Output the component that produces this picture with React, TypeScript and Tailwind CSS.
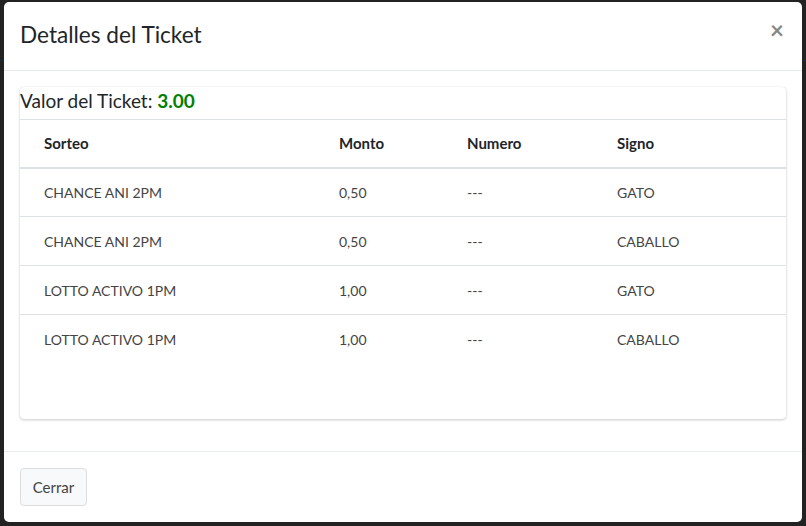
import React from "react";

const rows = [
  { s: "CHANCE ANI 2PM", m: "0,50", n: "---", g: "GATO" },
  { s: "CHANCE ANI 2PM", m: "0,50", n: "---", g: "CABALLO" },
  { s: "LOTTO ACTIVO 1PM", m: "1,00", n: "---", g: "GATO" },
  { s: "LOTTO ACTIVO 1PM", m: "1,00", n: "---", g: "CABALLO" },
];

export default function App() {
  return (
    <div
      className="w-[806px] h-[526px] bg-[#222222] overflow-hidden relative pl-[4px] pt-[2px]"
      style={{ fontFamily: "Lato, 'Liberation Sans', sans-serif" }}
    >
      <div className="absolute left-0 top-[60px] w-full h-px bg-[#1c2a3a]" />
      <div className="relative w-[798px] h-[520px] bg-white rounded-[5px] flex flex-col">
        <div className="h-[69px] flex items-center justify-between px-4 border-b border-[#e9ecef]">
          <h4 className="text-[22.6px] text-[#212529] leading-none -mt-[2px]">Detalles del Ticket</h4>
          <span className="text-[24px] font-bold text-[#888] leading-none mr-[2px] -mt-[12px]">×</span>
        </div>
        <div className="px-4 pt-4 pb-8 border-b border-[#e9ecef]">
          <div className="h-[332px] rounded-[4px] bg-white shadow-[0_0_1px_rgba(0,0,0,0.13),0_1px_3px_rgba(0,0,0,0.2)] flex flex-col">
            <div className="h-[32px] text-[19px] text-[#212529] leading-none pt-[4px]">
              Valor del Ticket: <span className="font-bold text-[#008000]">3.00</span>
            </div>
            <table className="w-full border-collapse text-[14px]">
              <thead>
                <tr className="h-[48px] border-t border-[#dee2e6] border-b-2 border-b-[#dee2e6]">
                  <th className="w-[307px] text-left pl-6 font-bold text-[15px] text-[#212529]">Sorteo</th>
                  <th className="w-[128px] text-left pl-3 font-bold text-[15px] text-[#212529]">Monto</th>
                  <th className="w-[150px] text-left pl-3 font-bold text-[15px] text-[#212529]">Numero</th>
                  <th className="text-left pl-3 font-bold text-[15px] text-[#212529]">Signo</th>
                </tr>
              </thead>
              <tbody>
                {rows.map((r, i) => (
                  <tr key={i} className={`h-[49px] ${i < rows.length - 1 ? "border-b border-[#dee2e6]" : ""}`}>
                    <td className="pl-6 text-[#444]">{r.s}</td>
                    <td className="pl-3 text-[#444]">{r.m}</td>
                    <td className="pl-3 text-[#444]">{r.n}</td>
                    <td className="pl-3 text-[#444]">{r.g}</td>
                  </tr>
                ))}
              </tbody>
            </table>
          </div>
        </div>
        <div className="px-4 pt-4">
          <button className="h-[38px] w-[67px] bg-[#f8f9fa] border border-[#ddd] rounded-[4px] text-[15px] text-[#444]">
            Cerrar
          </button>
        </div>
      </div>
    </div>
  );
}
